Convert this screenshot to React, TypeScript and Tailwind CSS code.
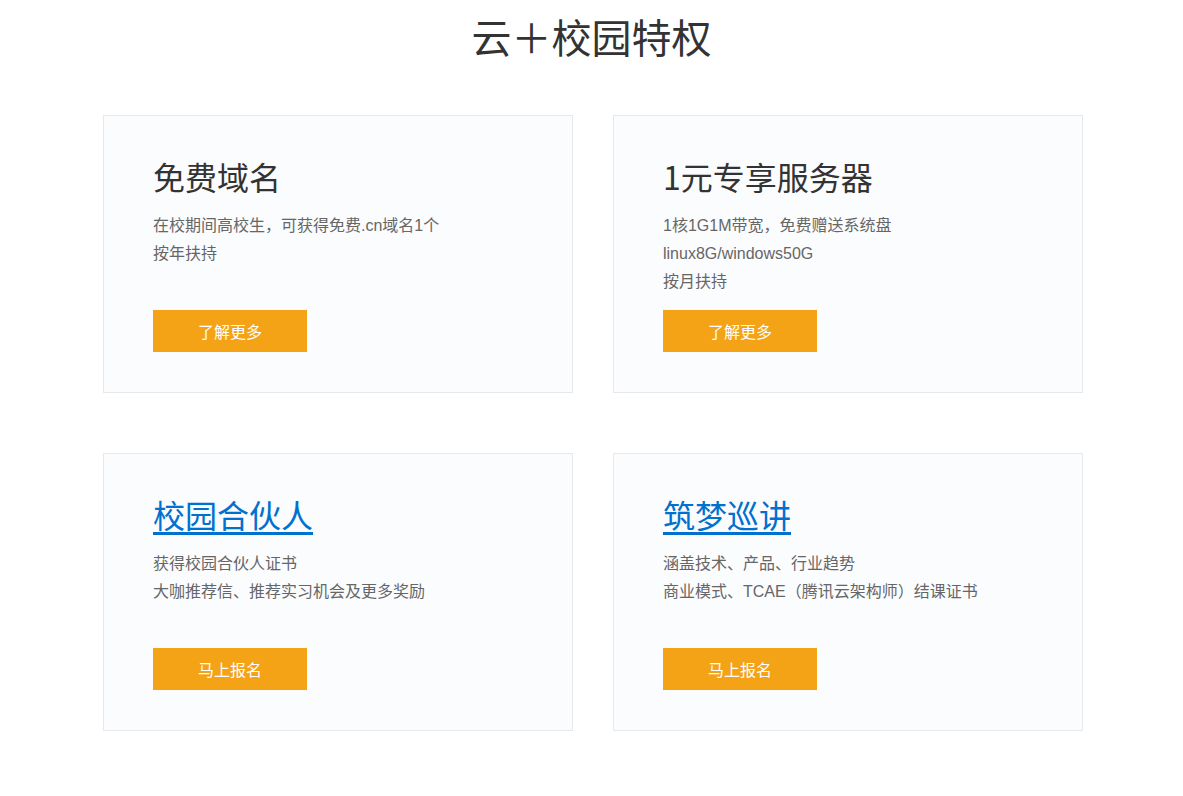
const cards = [
  {
    title: '免费域名',
    link: false,
    lines: ['在校期间高校生，可获得免费.cn域名1个', '按年扶持'],
    button: '了解更多',
  },
  {
    title: '1元专享服务器',
    link: false,
    lines: ['1核1G1M带宽，免费赠送系统盘', 'linux8G/windows50G', '按月扶持'],
    button: '了解更多',
  },
  {
    title: '校园合伙人',
    link: true,
    lines: ['获得校园合伙人证书', '大咖推荐信、推荐实习机会及更多奖励'],
    button: '马上报名',
  },
  {
    title: '筑梦巡讲',
    link: true,
    lines: ['涵盖技术、产品、行业趋势', '商业模式、TCAE（腾讯云架构师）结课证书'],
    button: '马上报名',
  },
];

export default function App() {
  return (
    <div className="min-h-[796px] bg-white font-['Noto_Sans_CJK_SC',sans-serif]">
      <h1 className="pt-[8px] text-center text-[40px] leading-[56px] text-[#333]">云＋校园特权</h1>

      <div className="mx-auto mt-[51px] w-[983px] pl-[3px]">
        <div className="grid grid-cols-2 gap-x-[40px] gap-y-[60px]">
          {cards.map((card, i) => (
            <div key={i} className="border border-[#e6e8eb] bg-[#fbfcfe] px-[49px] pt-[40px] pb-[40px]">
              {card.link ? (
                <a href="#" className="block w-fit text-[32px] leading-[40px] text-[#0071ce] underline underline-offset-[4px]">
                  {card.title}
                </a>
              ) : (
                <h3 className="text-[32px] leading-[40px] text-[#333]">{card.title}</h3>
              )}
              <div className="mt-[16px] h-[98px] font-['Liberation_Sans','Noto_Sans_CJK_SC',sans-serif] text-[16px] leading-[28px] text-[#666]">
                {card.lines.map((l, j) => (
                  <p key={j}>{l}</p>
                ))}
              </div>
              <button className="h-[42px] w-[154px] bg-[#f5a316] text-[16px] text-white">{card.button}</button>
            </div>
          ))}
        </div>
      </div>
    </div>
  );
}
